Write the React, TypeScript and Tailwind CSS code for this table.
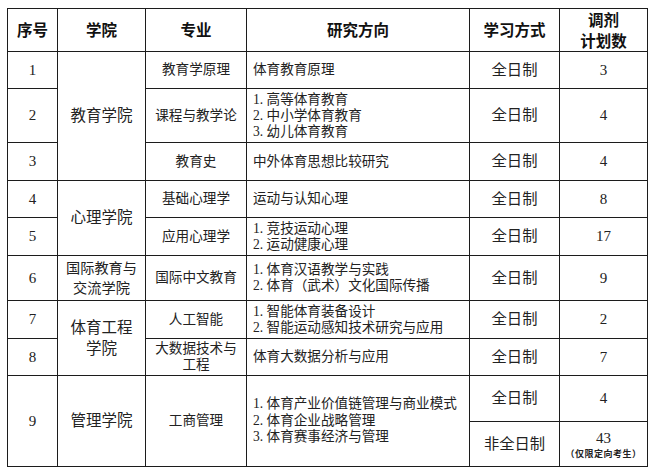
import React from "react";

const body = { fontFamily: '"Liberation Serif", "Noto Sans CJK SC", serif' };

type R = {
  no: string;
  college?: { text: React.ReactNode; span: number; cls: string };
  major: React.ReactNode;
  dir: React.ReactNode;
  h: number;
  plan: string;
};

const rows: R[] = [
  {
    no: "1",
    college: { text: "教育学院", span: 3, cls: "text-[15.5px]" },
    major: "教育学原理",
    dir: "体育教育原理",
    h: 37,
    plan: "3",
  },
  {
    no: "2",
    major: "课程与教学论",
    dir: (
      <>
        1. 高等体育教育
        <br />
        2. 中小学体育教育
        <br />
        3. 幼儿体育教育
      </>
    ),
    h: 54,
    plan: "4",
  },
  { no: "3", major: "教育史", dir: "中外体育思想比较研究", h: 38, plan: "4" },
  {
    no: "4",
    college: { text: "心理学院", span: 2, cls: "text-[15.5px]" },
    major: "基础心理学",
    dir: "运动与认知心理",
    h: 37,
    plan: "8",
  },
  {
    no: "5",
    major: "应用心理学",
    dir: (
      <>
        1. 竞技运动心理
        <br />
        2. 运动健康心理
      </>
    ),
    h: 38,
    plan: "17",
  },
  {
    no: "6",
    college: {
      text: (
        <>
          国际教育与
          <br />
          交流学院
        </>
      ),
      span: 1,
      cls: "text-[14.2px] leading-[20px]",
    },
    major: "国际中文教育",
    dir: (
      <>
        1. 体育汉语教学与实践
        <br />
        2. 体育（武术）文化国际传播
      </>
    ),
    h: 45,
    plan: "9",
  },
  {
    no: "7",
    college: {
      text: (
        <>
          体育工程
          <br />
          学院
        </>
      ),
      span: 2,
      cls: "text-[15.5px] leading-[21px]",
    },
    major: "人工智能",
    dir: (
      <>
        1. 智能体育装备设计
        <br />
        2. 智能运动感知技术研究与应用
      </>
    ),
    h: 38,
    plan: "2",
  },
  {
    no: "8",
    major: (
      <>
        大数据技术与
        <br />
        工程
      </>
    ),
    dir: "体育大数据分析与应用",
    h: 37,
    plan: "7",
  },
];

const td = "border border-[#1c1c1c] p-0 align-middle";

export default function App() {
  return (
    <div className="w-[653px] h-[472px] bg-white pt-[8px] pl-[7px]" style={body}>
      <table className="table-fixed border-collapse text-[#222] w-[640px]">
        <colgroup>
          <col className="w-[50px]" />
          <col className="w-[88px]" />
          <col className="w-[101px]" />
          <col className="w-[223px]" />
          <col className="w-[90px]" />
          <col className="w-[88px]" />
        </colgroup>
        <thead>
          <tr className="h-[43px]">
            {["序号", "学院", "专业", "研究方向", "学习方式"].map((t) => (
              <th
                key={t}
                className={`${td} text-center font-bold text-[15.5px] text-[#111]`}
                style={{ fontFamily: '"Noto Sans CJK SC", sans-serif' }}
              >
                {t}
              </th>
            ))}
            <th
              className={`${td} text-center font-bold text-[15.5px] leading-[21px] text-[#111]`}
              style={{ fontFamily: '"Noto Sans CJK SC", sans-serif' }}
            >
              调剂
              <br />
              计划数
            </th>
          </tr>
        </thead>
        <tbody>
          {rows.map((r) => (
            <tr key={r.no} style={{ height: r.h }}>
              <td className={`${td} text-center text-[15px]`}>{r.no}</td>
              {r.college && (
                <td rowSpan={r.college.span} className={`${td} text-center ${r.college.cls}`}>
                  {r.college.text}
                </td>
              )}
              <td className={`${td} text-center text-[13.6px] leading-[16px]`}>{r.major}</td>
              <td className={`${td} text-left text-[13.6px] leading-[16px] pl-[6px]`}>{r.dir}</td>
              <td className={`${td} text-center text-[15.3px]`}>全日制</td>
              <td className={`${td} text-center text-[15px]`}>{r.plan}</td>
            </tr>
          ))}
          <tr className="h-[46px]">
            <td rowSpan={2} className={`${td} text-center text-[15px]`}>
              9
            </td>
            <td rowSpan={2} className={`${td} text-center text-[15.5px]`}>
              管理学院
            </td>
            <td rowSpan={2} className={`${td} text-center text-[13.6px]`}>
              工商管理
            </td>
            <td rowSpan={2} className={`${td} text-left text-[13.6px] leading-[16.5px] pl-[6px]`}>
              1. 体育产业价值链管理与商业模式
              <br />
              2. 体育企业战略管理
              <br />
              3. 体育赛事经济与管理
            </td>
            <td className={`${td} text-center text-[15.3px]`}>全日制</td>
            <td className={`${td} text-center text-[15px]`}>4</td>
          </tr>
          <tr className="h-[45px]">
            <td className={`${td} text-center text-[15.3px]`}>非全日制</td>
            <td className={`${td} text-center`}>
              <div className="text-[15px] leading-[18px] pt-[2px]">43</div>
              <div className="text-[9px] leading-[14px] font-bold tracking-[0.5px]">（仅限定向考生）</div>
            </td>
          </tr>
        </tbody>
      </table>
    </div>
  );
}
